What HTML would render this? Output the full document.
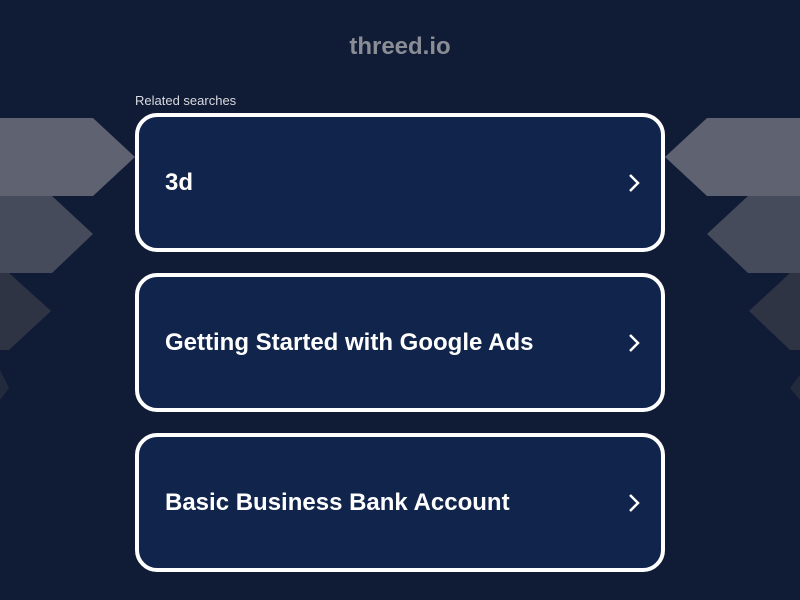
<!DOCTYPE html>
<html><head><style>
html,body{margin:0;padding:0}
body{width:800px;height:600px;background:#101b35;position:relative;overflow:hidden;font-family:"Liberation Sans",Arial,sans-serif}
.t{position:absolute;top:33px;left:0;width:800px;text-align:center;color:#8a8d95;font-weight:bold;font-size:24px}
.rs{position:absolute;left:135px;top:93px;color:#d8dae0;font-size:13px}
.c{position:absolute;left:135px;width:530px;height:139px;box-sizing:border-box;border:4px solid #fff;border-radius:22px;background:#11244b;color:#fff;font-weight:bold;font-size:24px}
.c span{position:absolute;left:26px;top:50%;transform:translateY(-50%)}
.c svg{position:absolute;right:20px;top:50%;margin-top:-11px}
</style></head><body>
<svg width="800" height="600" style="position:absolute;left:0;top:0">
<polygon points="0,118 93,118 135,157 93,196 0,196" fill="#5f6270"/>
<polygon points="0,196 52,196 93,234 52,273 0,273" fill="#464b5b"/>
<polygon points="0,273 9,273 51,311 9,350 0,350" fill="#2f3445"/>
<polygon points="0,370 9,388 0,400" fill="#222a3e"/>
<polygon points="800,118 707,118 665,157 707,196 800,196" fill="#5f6270"/>
<polygon points="800,196 748,196 707,234 748,273 800,273" fill="#464b5b"/>
<polygon points="800,273 790,273 749,311 790,350 800,350" fill="#2f3445"/>
<polygon points="800,375 790,388 800,400" fill="#222a3e"/>
</svg>
<div class="t">threed.io</div>
<div class="rs">Related searches</div>
<div class="c" style="top:113px"><span>3d</span><svg width="14" height="22"><path d="M3 3 L11 11 L3 19" stroke="#fff" stroke-width="2.5" fill="none"/></svg></div>
<div class="c" style="top:273px"><span>Getting Started with Google Ads</span><svg width="14" height="22"><path d="M3 3 L11 11 L3 19" stroke="#fff" stroke-width="2.5" fill="none"/></svg></div>
<div class="c" style="top:433px"><span>Basic Business Bank Account</span><svg width="14" height="22"><path d="M3 3 L11 11 L3 19" stroke="#fff" stroke-width="2.5" fill="none"/></svg></div>
</body></html>
